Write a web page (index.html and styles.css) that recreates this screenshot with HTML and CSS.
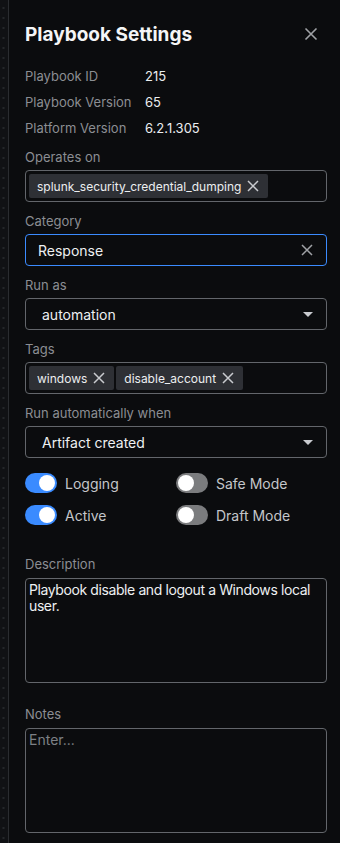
FILE: index.html
```html
<!DOCTYPE html>
<html>
<head>
<meta charset="utf-8">
<link rel="stylesheet" href="styles.css">
</head>
<body>
<div class="layout">
  <div class="rail"></div>
  <div class="panel">
    <div class="header">
      <h1 class="title">Playbook Settings</h1>
      <svg class="close" width="14" height="14" viewBox="0 0 14 14"><path d="M1.5 1.5 L12.5 12.5 M12.5 1.5 L1.5 12.5" stroke="#a0a2a6" stroke-width="1.6" fill="none"/></svg>
    </div>
    <div class="info">
      <div class="info-label">Playbook ID</div><div class="info-value">215</div>
      <div class="info-label">Playbook Version</div><div class="info-value">65</div>
      <div class="info-label">Platform Version</div><div class="info-value">6.2.1.305</div>
    </div>

    <div class="field">
      <div class="label">Operates on</div>
      <div class="box chips">
        <span class="chip">splunk_security_credential_dumping<svg class="chip-x" width="12" height="12" viewBox="0 0 12 12"><path d="M1 1 L11 11 M11 1 L1 11" stroke="#c9cbcf" stroke-width="1.5" fill="none"/></svg></span>
      </div>
    </div>

    <div class="field">
      <div class="label">Category</div>
      <div class="box text focus">
        <span class="val">Response</span>
        <svg width="12" height="12" viewBox="0 0 12 12"><path d="M1 1 L11 11 M11 1 L1 11" stroke="#a0a2a6" stroke-width="1.5" fill="none"/></svg>
      </div>
    </div>

    <div class="field">
      <div class="label">Run as</div>
      <div class="box select">
        <span class="val">automation</span>
        <span class="caret"></span>
      </div>
    </div>

    <div class="field">
      <div class="label">Tags</div>
      <div class="box chips">
        <span class="chip">windows<svg class="chip-x" width="12" height="12" viewBox="0 0 12 12"><path d="M1 1 L11 11 M11 1 L1 11" stroke="#c9cbcf" stroke-width="1.5" fill="none"/></svg></span>
        <span class="chip">disable_account<svg class="chip-x" width="12" height="12" viewBox="0 0 12 12"><path d="M1 1 L11 11 M11 1 L1 11" stroke="#c9cbcf" stroke-width="1.5" fill="none"/></svg></span>
      </div>
    </div>

    <div class="field">
      <div class="label">Run automatically when</div>
      <div class="box select">
        <span class="val">Artifact created</span>
        <span class="caret"></span>
      </div>
    </div>

    <div class="toggles">
      <div class="toggle-item"><span class="switch on"><span class="knob"></span></span><span class="tlabel">Logging</span></div>
      <div class="toggle-item"><span class="switch"><span class="knob"></span></span><span class="tlabel">Safe Mode</span></div>
      <div class="toggle-item"><span class="switch on"><span class="knob"></span></span><span class="tlabel">Active</span></div>
      <div class="toggle-item"><span class="switch"><span class="knob"></span></span><span class="tlabel">Draft Mode</span></div>
    </div>

    <div class="field area-field desc">
      <div class="label">Description</div>
      <div class="area">Playbook disable and logout a Windows local user.</div>
    </div>

    <div class="field area-field notes">
      <div class="label">Notes</div>
      <div class="area placeholder">Enter...</div>
    </div>
  </div>
</div>
</body>
</html>
```
FILE: styles.css
```css
* { box-sizing: border-box; }
html, body {
  margin: 0;
  padding: 0;
  background: #0b0c0e;
  font-family: Inter, "Noto Sans", "Liberation Sans", sans-serif;
  color: #e6e7e9;
}
.layout {
  display: flex;
  min-height: 843px;
}
.rail {
  width: 9px;
  flex: none;
  background-color: #101114;
  background-image: radial-gradient(circle, #24262a 0.8px, transparent 1.2px);
  background-size: 8px 10px;
  background-position: -0.5px 3px;
  border-right: 1px solid #2a2c30;
}
.panel {
  flex: 1;
  padding: 21px 13px 0 16px;
}
.header {
  display: flex;
  align-items: center;
  justify-content: space-between;
  height: 26px;
}
.title {
  margin: 0;
  font-size: 19px;
  font-weight: 700;
  color: #f4f5f6;
}
.close { margin-right: 9px; }
.info {
  display: grid;
  grid-template-columns: 120px 1fr;
  grid-auto-rows: 26px;
  align-items: center;
  margin-top: 16px;
  font-size: 13px;
}
.info-label { color: #8b8e93; }
.info-value { color: #eceef0; }
.field { margin-top: 6px; }
.label {
  font-size: 13px;
  line-height: 20px;
  color: #8b8e93;
  margin-bottom: 3px;
}
.field + .field { margin-top: 9px; }
.box {
  height: 32px;
  border: 1px solid #63666b;
  border-radius: 4px;
  display: flex;
  align-items: center;
}
.box.focus { border-color: #3b8bff; }
.text {
  padding: 0 13px 0 12px;
  justify-content: space-between;
  font-size: 14px;
}
.select {
  padding: 0 13px 0 16px;
  justify-content: space-between;
  font-size: 14px;
}
.val { color: #eef0f2; }
.caret {
  width: 0;
  height: 0;
  border-left: 5px solid transparent;
  border-right: 5px solid transparent;
  border-top: 5px solid #c9cbcf;
  margin-top: 1px;
}
.chips {
  padding: 0 3px;
  gap: 2px;
}
.chip {
  display: inline-flex;
  align-items: center;
  height: 24px;
  padding: 0 9px 0 8px;
  background: #2e3035;
  border-radius: 2px;
  font-size: 12px;
  color: #eceef0;
}
.chip-x { margin-left: 6px; }
.toggles {
  display: grid;
  grid-template-columns: 151px 1fr;
  row-gap: 12px;
  margin-top: 15px;
}
.toggle-item {
  display: flex;
  align-items: center;
  height: 20px;
}
.switch {
  width: 32px;
  height: 20px;
  border-radius: 10px;
  background: #7b7c7e;
  display: flex;
  align-items: center;
  padding: 0 2px;
}
.switch.on {
  background: #3a8bff;
  justify-content: flex-end;
}
.knob {
  width: 16px;
  height: 16px;
  border-radius: 50%;
  background: #ffffff;
}
.tlabel {
  margin-left: 8px;
  font-size: 14px;
  color: #c4c6ca;
}
.toggles + .field { margin-top: 29px; }
.area-field .label { margin-bottom: 4px; }
.area {
  height: 105px;
  border: 1px solid #63666b;
  border-radius: 4px;
  padding: 3px 3px;
  font-size: 14px;
  letter-spacing: -0.4px;
  line-height: 16px;
  color: #eef0f2;
}
.area.placeholder { color: #7d8085; letter-spacing: 0; }
.field.notes { margin-top: 21px; }
```
